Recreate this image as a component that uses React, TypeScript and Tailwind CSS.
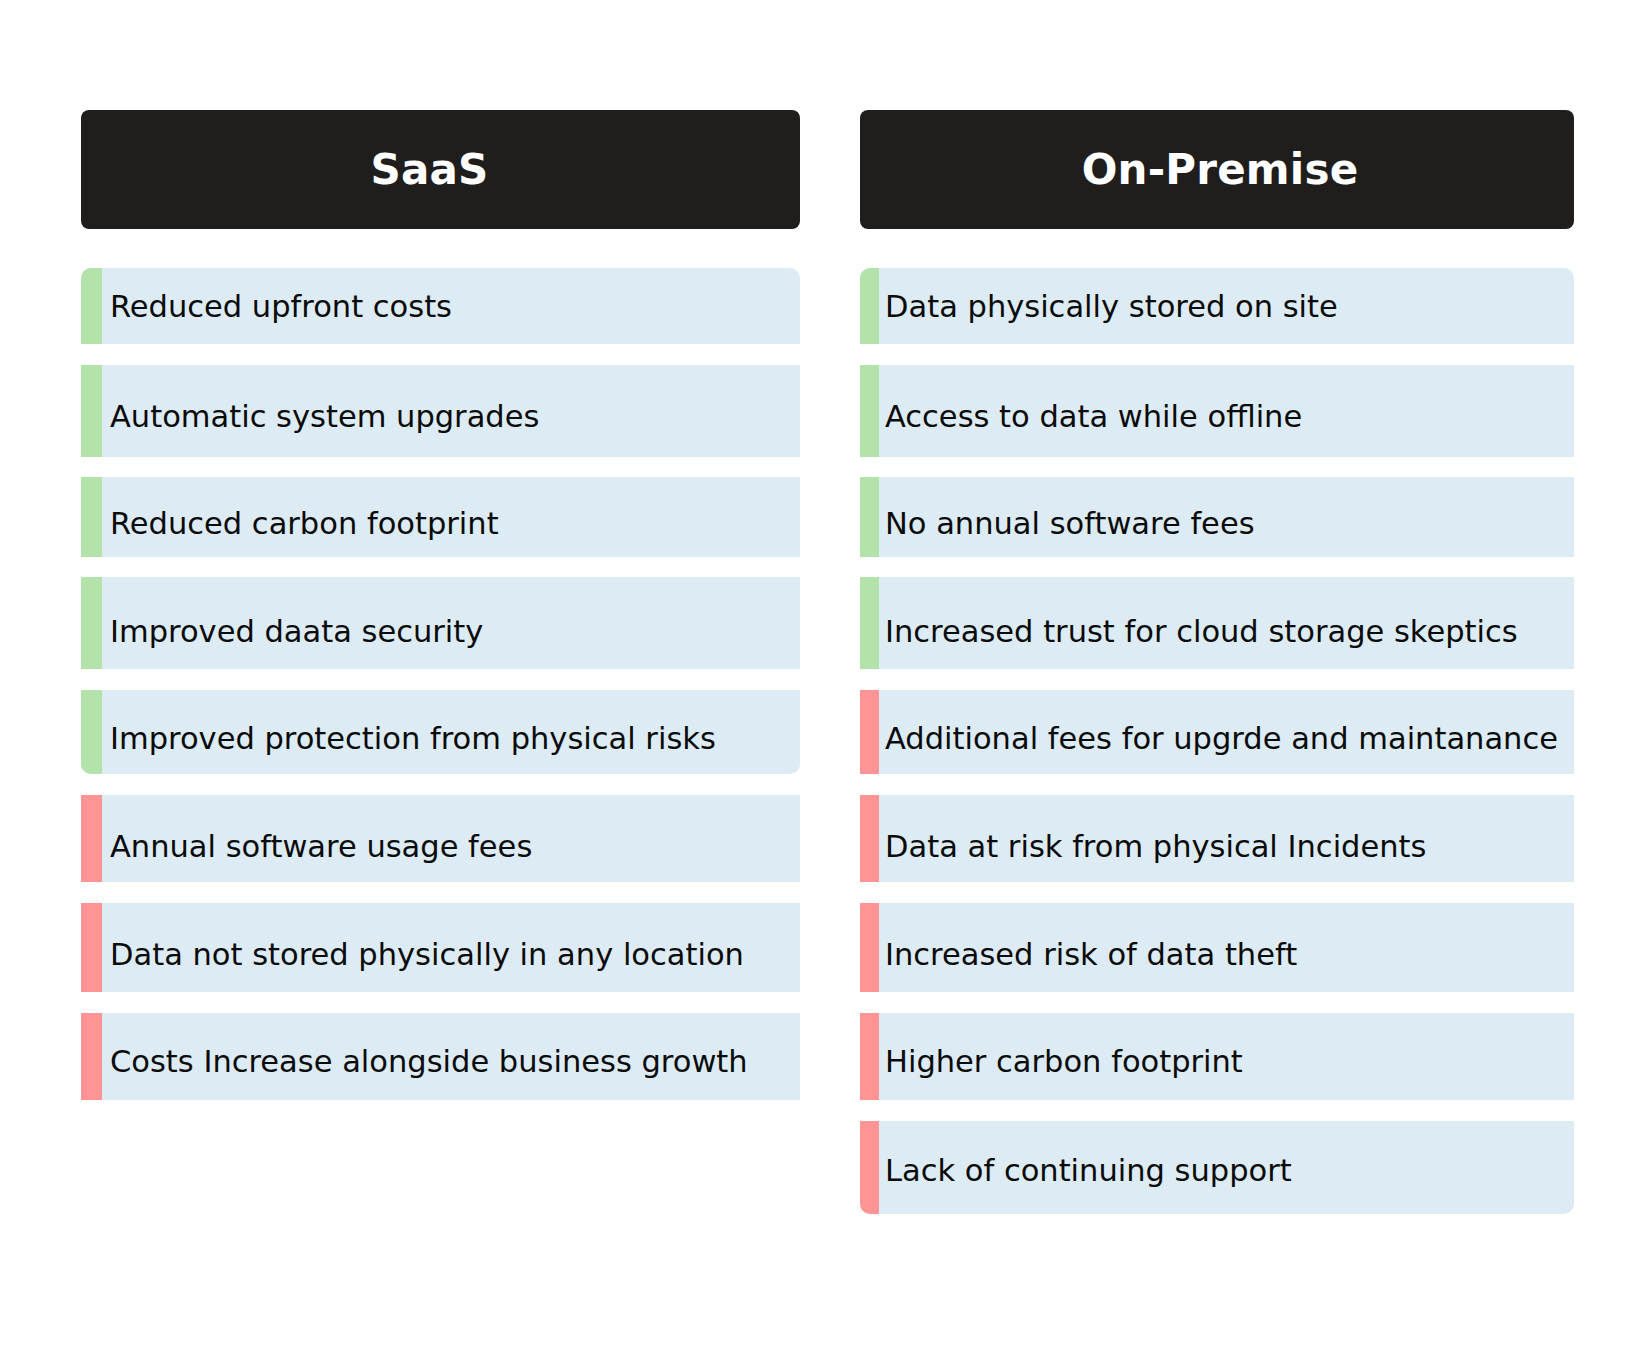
import React from "react";

type Row = {
  text: string;
  good: boolean;
  h: string;
  pt: string;
  mt: string;
  round?: string;
};

const rowH = [
  "h-[76px]",
  "h-[92px]",
  "h-[80px]",
  "h-[92px]",
  "h-[84px]",
  "h-[87px]",
  "h-[89px]",
  "h-[87px]",
  "h-[93px]",
];
const rowPt = [
  "pt-[21px]",
  "pt-[34px]",
  "pt-[29px]",
  "pt-[37px]",
  "pt-[31px]",
  "pt-[34px]",
  "pt-[34px]",
  "pt-[31px]",
  "pt-[32px]",
];
const rowMt = [
  "mt-0",
  "mt-[21px]",
  "mt-[20px]",
  "mt-[20px]",
  "mt-[21px]",
  "mt-[21px]",
  "mt-[21px]",
  "mt-[21px]",
  "mt-[21px]",
];

const saasTexts = [
  "Reduced upfront costs",
  "Automatic system upgrades",
  "Reduced carbon footprint",
  "Improved daata security",
  "Improved protection from physical risks",
  "Annual software usage fees",
  "Data not stored physically in any location",
  "Costs Increase alongside business growth",
];

const onpremTexts = [
  "Data physically stored on site",
  "Access to data while offline",
  "No annual software fees",
  "Increased trust for cloud storage skeptics",
  "Additional fees for upgrde and maintanance",
  "Data at risk from physical Incidents",
  "Increased risk of data theft",
  "Higher carbon footprint",
  "Lack of continuing support",
];

const saas: Row[] = saasTexts.map((text, i) => ({
  text,
  good: i < 5,
  h: rowH[i],
  pt: rowPt[i],
  mt: rowMt[i],
  round: i === 0 ? "rounded-t-[10px]" : i === 4 ? "rounded-b-[10px]" : "",
}));

const onprem: Row[] = onpremTexts.map((text, i) => ({
  text,
  good: i < 4,
  h: rowH[i],
  pt: rowPt[i],
  mt: rowMt[i],
  round: i === 0 ? "rounded-t-[10px]" : i === 8 ? "rounded-b-[10px]" : "",
}));

function Column({
  title,
  rows,
  barW,
  textPl,
  titleShift,
}: {
  title: string;
  rows: Row[];
  barW: string;
  textPl: string;
  titleShift: string;
}) {
  return (
    <div className="flex flex-col">
      <div
        className={`h-[119px] rounded-[8px] bg-[#1f1e1d] flex items-center justify-center ${titleShift}`}
      >
        <span className="text-white text-[42px] font-bold leading-none tracking-[0.2px]">
          {title}
        </span>
      </div>
      <div className="mt-[39px] flex flex-col">
        {rows.map((r) => (
          <div
            key={r.text}
            className={`flex overflow-hidden bg-[#dcebf4] ${r.h} ${r.mt} ${r.round ?? ""}`}
          >
            <div
              className={`${barW} shrink-0 ${r.good ? "bg-[#b3e2aa]" : "bg-[#fe9494]"}`}
            />
            <div
              className={`${textPl} ${r.pt} text-[30.5px] leading-[36px] text-[#0b0b0b] whitespace-nowrap`}
            >
              {r.text}
            </div>
          </div>
        ))}
      </div>
    </div>
  );
}

export default function App() {
  return (
    <div
      className="w-[1639px] h-[1352px] bg-white pt-[110px] pl-[81px]"
      style={{ fontFamily: '"DejaVu Sans", sans-serif' }}
    >
      <div className="grid grid-cols-[719px_714px] gap-x-[60px]">
        <Column
          title="SaaS"
          rows={saas}
          barW="w-[21px]"
          textPl="pl-[8px]"
          titleShift="pr-[22px]"
        />
        <Column
          title="On-Premise"
          rows={onprem}
          barW="w-[19px]"
          textPl="pl-[6px]"
          titleShift="pl-[6px]"
        />
      </div>
    </div>
  );
}
